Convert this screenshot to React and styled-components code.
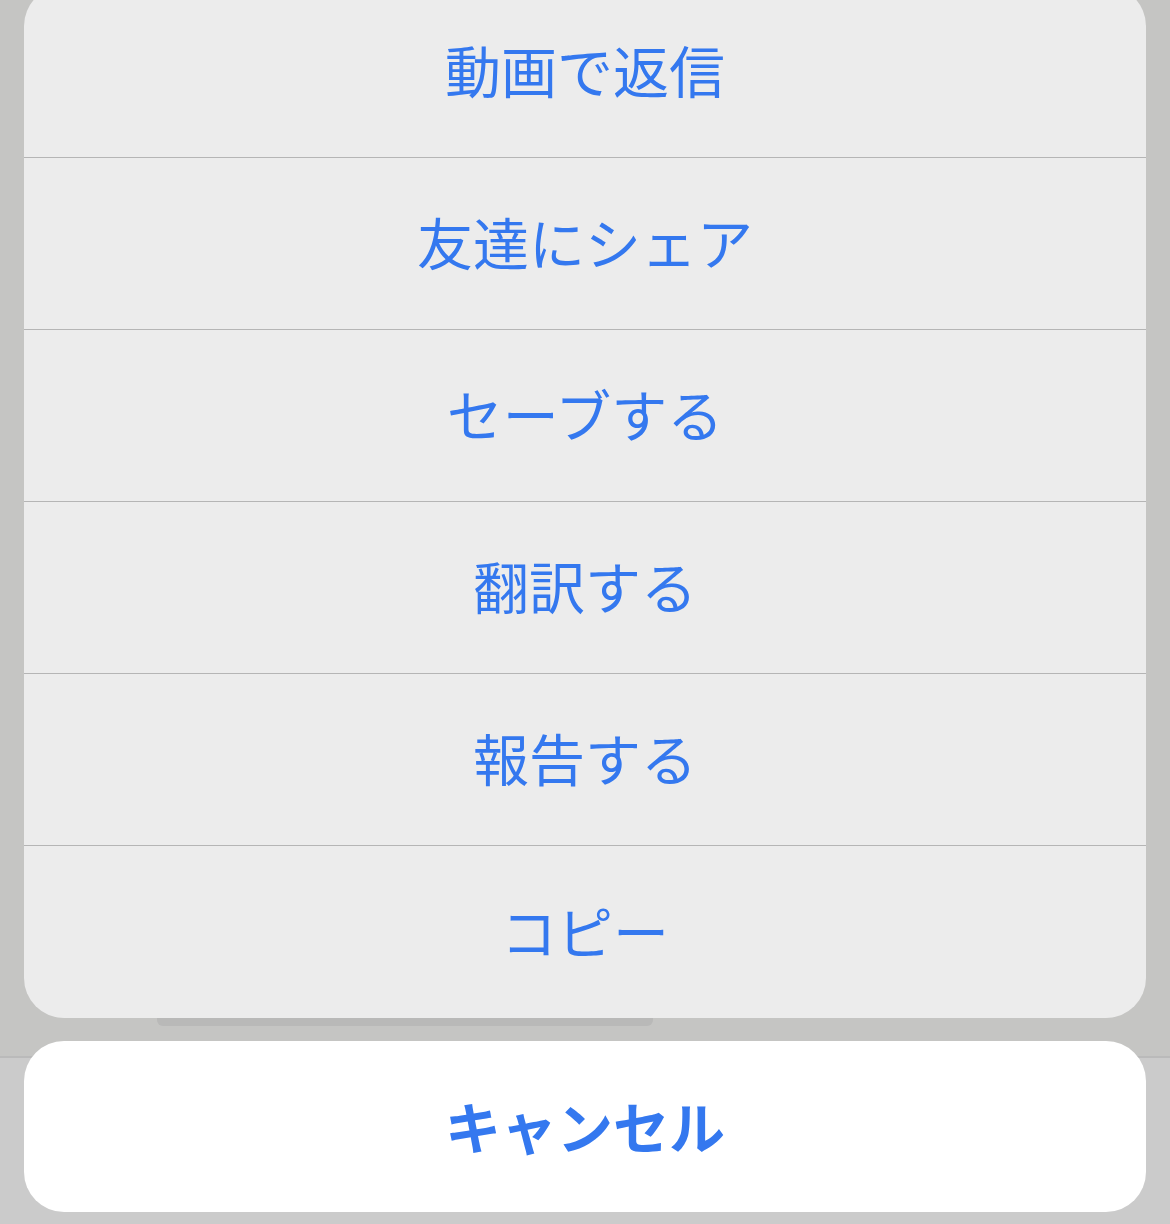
import React from "react";
import styled, { createGlobalStyle } from "styled-components";

const Global = createGlobalStyle`
  html, body { margin: 0; padding: 0; }
  body { background: #cacaca; overflow: hidden; }
  * { box-sizing: border-box; }
`;

const Page = styled.div`
  width: 1170px;
  height: 1224px;
  overflow: hidden;
  display: flex;
  flex-direction: column;
  padding: 0 24px;
  background: linear-gradient(
    to bottom,
    #c5c5c3 0,
    #c5c5c3 1056px,
    #bababa 1056px,
    #bababa 1058px,
    #cbcbcb 1058px
  );
  font-family: "Noto Sans CJK JP", "Noto Sans", sans-serif;
`;

const Sheet = styled.div`
  margin-top: -14px;
  background: #ececec;
  border-radius: 40px;
  overflow: hidden;
  display: flex;
  flex-direction: column;
`;

const Row = styled.div`
  height: 172px;
  display: flex;
  align-items: center;
  justify-content: center;
  color: #3478ef;
  font-size: 56px;
  font-weight: 400;
  padding-bottom: 6px;
  border-bottom: ${(p) => (p.$last ? "none" : "1px solid #b5b5b5")};
`;

const Peek = styled.div`
  margin-left: 133px;
  width: 496px;
  height: 8px;
  background: #b9b9b8;
  border-radius: 0 0 6px 6px;
`;

const Cancel = styled.div`
  margin-top: 15px;
  height: 171px;
  background: #ffffff;
  border-radius: 40px;
  display: flex;
  align-items: center;
  justify-content: center;
  color: #3478ef;
  font-size: 56px;
  font-weight: 700;
  padding-bottom: 4px;
`;

const items = ["動画で返信", "友達にシェア", "セーブする", "翻訳する", "報告する", "コピー"];

export default function App() {
  return (
    <>
      <Global />
      <Page>
        <Sheet>
          {items.map((t, i) => (
            <Row key={t} $last={i === items.length - 1}>
              {t}
            </Row>
          ))}
        </Sheet>
        <Peek />
        <Cancel>キャンセル</Cancel>
      </Page>
    </>
  );
}
